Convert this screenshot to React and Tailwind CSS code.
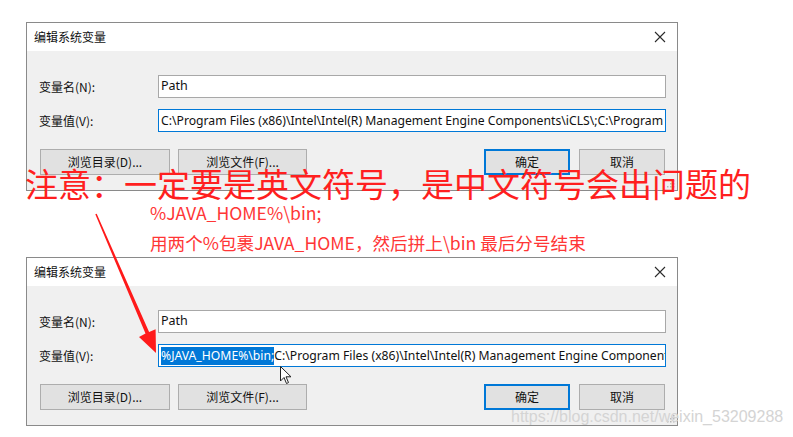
import React from "react";

const UI_FONT = { fontFamily: '"Noto Sans", "Noto Sans CJK SC", sans-serif' };

function CloseIcon() {
  return (
    <svg width="12" height="12" viewBox="0 0 12 12" className="block">
      <path d="M1 1 L11 11 M11 1 L1 11" stroke="#2b2b2b" strokeWidth="1.1" fill="none" />
    </svg>
  );
}

function Grip() {
  return (
    <svg width="8" height="8" viewBox="0 0 8 8" className="absolute right-[2px] bottom-[2px]">
      <rect x="6" y="0" width="1.5" height="1.5" fill="#b5b5b5" />
      <rect x="3" y="3" width="1.5" height="1.5" fill="#b5b5b5" />
      <rect x="6" y="3" width="1.5" height="1.5" fill="#b5b5b5" />
      <rect x="0" y="6" width="1.5" height="1.5" fill="#b5b5b5" />
      <rect x="3" y="6" width="1.5" height="1.5" fill="#b5b5b5" />
      <rect x="6" y="6" width="1.5" height="1.5" fill="#b5b5b5" />
    </svg>
  );
}

function Btn({ children, w, primary }) {
  return (
    <div
      className={
        "h-[26px] flex items-center justify-center bg-[#e1e1e1] text-[12px] text-[#111] " +
        (primary ? "border-2 border-[#0078d7]" : "border border-[#adadad]")
      }
      style={{ width: w }}
    >
      <span className="[font-family:'Noto_Sans_CJK_SC','Noto_Sans',sans-serif]">{children}</span>
    </div>
  );
}

function Dialog({ value }) {
  return (
    <div className="relative w-[652px] h-[169px] border border-[#8a8a8a] bg-[#f0f0f0] flex flex-col shrink-0" style={UI_FONT}>
      <div className="h-[28px] bg-white flex items-center justify-between pl-[7px] pr-[11px]">
        <span className="text-[12px] text-[#111] [font-family:'Noto_Sans_CJK_SC',sans-serif]">编辑系统变量</span>
        <CloseIcon />
      </div>
      <div className="flex-1 flex flex-col pl-[12px] pr-[11px] pt-[24px]">
        <div className="flex items-center h-[23px]">
          <span className="w-[119px] text-[12px] text-[#111] [font-family:'Noto_Sans_CJK_SC',sans-serif]">变量名(N):</span>
          <div className="flex-1 h-[23px] bg-white border border-[#a8a8a8] flex items-center pl-[2px] text-[12.5px] text-[#111] overflow-hidden whitespace-nowrap">
            Path
          </div>
        </div>
        <div className="flex items-center h-[23px] mt-[11px]">
          <span className="w-[119px] text-[12px] text-[#111] [font-family:'Noto_Sans_CJK_SC',sans-serif]">变量值(V):</span>
          <div className="flex-1 h-[23px] bg-white border border-[#0078d7] flex items-center pl-[2px] text-[12.2px] leading-[18px] text-[#111] overflow-hidden whitespace-nowrap">
            {value}
          </div>
        </div>
        <div className="flex justify-between mt-[17px] pl-[1px] pr-[1px]">
          <div className="flex gap-[8px]">
            <Btn w="130px">浏览目录(D)...</Btn>
            <Btn w="129px">浏览文件(F)...</Btn>
          </div>
          <div className="flex gap-[9px]">
            <Btn w="86px" primary>确定</Btn>
            <Btn w="86px">取消</Btn>
          </div>
        </div>
      </div>
      <Grip />
    </div>
  );
}

export default function App() {
  return (
    <div className="relative w-[793px] h-[437px] overflow-hidden bg-white pl-[26px] pt-[22px] flex flex-col">
      <Dialog value="C:\Program Files (x86)\Intel\Intel(R) Management Engine Components\iCLS\;C:\Program Files\Intel\Intel(R) Management Engine Components\iCLS\" />

      <div className="h-[66px] pt-[7px] pl-[124px] text-[17.6px] leading-[30px] text-[#ff3636] [font-family:'Noto_Sans_CJK_SC',sans-serif] whitespace-nowrap">
        <div>%JAVA_HOME%\bin;</div>
        <div>用两个%包裹JAVA_HOME，然后拼上\bin 最后分号结束</div>
      </div>

      <Dialog
        value={
          <>
            <span className="bg-[#0078d7] text-white">%JAVA_HOME%\bin;</span>
            <span>C:\Program Files (x86)\Intel\Intel(R) Management Engine Components\iCLS\</span>
          </>
        }
      />

      {/* big red annotation */}
      <div className="absolute left-[25px] top-[167px] text-[33px] leading-none text-[#ff1f1f] whitespace-nowrap [font-family:'Noto_Sans_CJK_SC',sans-serif]">
        注意：一定要是英文符号，是中文符号会出问题的
      </div>

      {/* arrow */}
      <svg className="absolute left-0 top-0 pointer-events-none" width="793" height="437" viewBox="0 0 793 437">
        <polygon points="96.7,213.7 95.3,214.3 145.5,333.6 139,337 156,353 155.6,329.2 149.1,332" fill="#ff1a1a" />
      </svg>

      {/* mouse cursor */}
      <svg className="absolute left-[280px] top-[366px]" width="12" height="19" viewBox="0 0 12 19">
        <path d="M0.5 0.5 L0.5 15 L4 11.5 L6.5 17.5 L8.5 16.6 L6 10.8 L11 10.8 Z" fill="white" stroke="#222" strokeWidth="1" strokeLinejoin="round" />
      </svg>

      {/* watermark */}
      <div className="absolute left-[511px] top-[409px] text-[16px] leading-none text-[#d4d4d4] whitespace-nowrap [font-family:'Liberation_Sans',sans-serif]">
        https://blog.csdn.net/weixin_53209288
      </div>
    </div>
  );
}
